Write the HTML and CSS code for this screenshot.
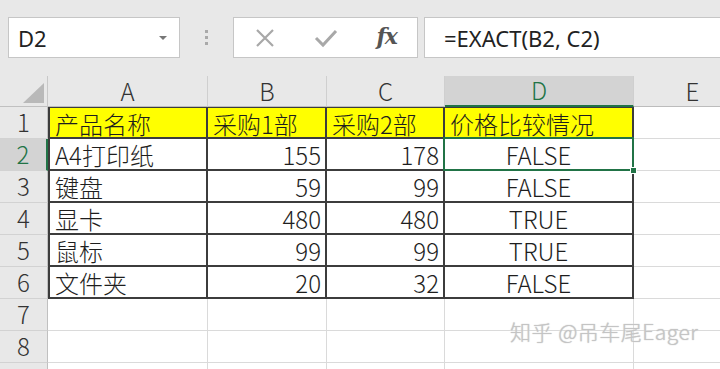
FILE: index.html
```html
<!DOCTYPE html>
<html lang="zh-CN">
<head>
    <meta charset="UTF-8">
    <title>EXACT</title>
    <link rel="stylesheet" href="styles.css">
</head>
<body>
    <div class="toolbar">
        <div class="name-box">
            <span>D2</span>
            <svg class="caret" width="10" height="6" viewBox="0 0 10 6"><path d="M1 1 L9 1 L5 5 Z" fill="#777"/></svg>
        </div>
        <div class="grip"><i></i><i></i><i></i></div>
        <div class="fx-buttons">
            <svg class="btn-icon" width="22" height="22" viewBox="0 0 22 22"><path d="M3 3 L19 19 M19 3 L3 19" stroke="#a8a8a8" stroke-width="2.2" fill="none"/></svg>
            <svg class="btn-icon" width="24" height="22" viewBox="0 0 24 22"><path d="M2 11 L9 18 L22 4" stroke="#a8a8a8" stroke-width="3" fill="none"/></svg>
            <span class="fx">fx</span>
        </div>
        <div class="formula">=EXACT(B2, C2)</div>
    </div>

    <div class="sheet">
        <div class="corner"><svg width="48" height="31" viewBox="0 0 48 31"><path d="M23 27 L44 27 L44 7 Z" fill="#b9b9b9"/></svg></div>
        <div class="col-head">A</div>
        <div class="col-head">B</div>
        <div class="col-head">C</div>
        <div class="col-head active">D</div>
        <div class="col-head">E</div>

        <div class="row-head">1</div>
        <div class="cell t tl tt hl">产品名称</div>
        <div class="cell t tt hl">采购1部</div>
        <div class="cell t tt hl">采购2部</div>
        <div class="cell t tt hl">价格比较情况</div>
        <div class="cell"></div>

        <div class="row-head active">2</div>
        <div class="cell t tl">A4打印纸</div>
        <div class="cell t num">155</div>
        <div class="cell t num">178</div>
        <div class="cell t mid selected"><span>FALSE</span><span class="sel-frame"></span><span class="handle"></span></div>
        <div class="cell"></div>

        <div class="row-head">3</div>
        <div class="cell t tl">键盘</div>
        <div class="cell t num">59</div>
        <div class="cell t num">99</div>
        <div class="cell t mid">FALSE</div>
        <div class="cell"></div>

        <div class="row-head">4</div>
        <div class="cell t tl">显卡</div>
        <div class="cell t num">480</div>
        <div class="cell t num">480</div>
        <div class="cell t mid">TRUE</div>
        <div class="cell"></div>

        <div class="row-head">5</div>
        <div class="cell t tl">鼠标</div>
        <div class="cell t num">99</div>
        <div class="cell t num">99</div>
        <div class="cell t mid">TRUE</div>
        <div class="cell"></div>

        <div class="row-head">6</div>
        <div class="cell t tl">文件夹</div>
        <div class="cell t num">20</div>
        <div class="cell t num">32</div>
        <div class="cell t mid">FALSE</div>
        <div class="cell"></div>

        <div class="row-head">7</div>
        <div class="cell"></div><div class="cell"></div><div class="cell"></div><div class="cell"></div><div class="cell"></div>

        <div class="row-head">8</div>
        <div class="cell"></div><div class="cell"></div><div class="cell"></div><div class="cell"></div><div class="cell"></div>

        <div class="row-head"></div>
        <div class="cell"></div><div class="cell"></div><div class="cell"></div><div class="cell"></div><div class="cell"></div>

        <div class="watermark">知乎 @吊车尾Eager</div>
    </div>
</body>
</html>
```

FILE: styles.css
```css
* {
    margin: 0;
    padding: 0;
    box-sizing: border-box;
}

body {
    width: 720px;
    height: 369px;
    overflow: hidden;
    background: #e8e8e8;
    font-family: "Noto Sans", "Noto Sans CJK SC", sans-serif;
    color: #222;
}

/* formula bar */
.toolbar {
    height: 76px;
    display: flex;
    align-items: flex-start;
    padding: 17px 0 0 8px;
}

.name-box {
    width: 172px;
    height: 41px;
    background: #fff;
    border: 1px solid #c6c6c6;
    display: flex;
    align-items: center;
    justify-content: space-between;
    padding: 0 11px 0 9px;
    font-size: 22px;
}

.grip {
    width: 53px;
    height: 41px;
    display: flex;
    flex-direction: column;
    align-items: center;
    justify-content: center;
    gap: 3px;
}

.grip i {
    width: 3px;
    height: 3px;
    background: #a9a9a9;
}

.fx-buttons {
    width: 185px;
    height: 41px;
    background: #fff;
    border: 1px solid #c6c6c6;
    display: flex;
    align-items: center;
    padding: 0 20px 0 20px;
    justify-content: space-between;
}

.fx {
    font-family: "DejaVu Serif", "Liberation Serif", serif;
    font-style: italic;
    font-weight: bold;
    font-size: 22px;
    color: #555;
    letter-spacing: -1px;
    padding-bottom: 3px;
}

.formula {
    flex: 1;
    height: 41px;
    margin-left: 6px;
    background: #fff;
    border: 1px solid #c6c6c6;
    border-right: none;
    display: flex;
    align-items: center;
    padding-left: 19px;
    font-size: 22px;
    color: #222;
}

/* grid */
.sheet {
    position: relative;
    display: grid;
    grid-template-columns: 48px 160px 119px 118px 189px 118px;
    grid-template-rows: 31px repeat(9, 32px);
    background: #fff;
    font-family: "Noto Sans CJK SC", sans-serif;
    font-weight: 300;
    font-size: 24px;
    line-height: 1.1;
}

.corner {
    background: #e8e8e8;
    border-right: 1px solid #c8c8c8;
    border-bottom: 1px solid #c0c0c0;
}

.corner svg {
    display: block;
}

.col-head {
    background: #e8e8e8;
    border-right: 1px solid #cfcfcf;
    border-bottom: 1px solid #bcbcbc;
    display: flex;
    align-items: center;
    justify-content: center;
    color: #333;
}

.col-head.active {
    background: #d3d3d3;
    color: #217346;
    border-bottom: 2px solid #217346;
}

.row-head {
    background: #e8e8e8;
    border-right: 1px solid #c0c0c0;
    border-bottom: 1px solid #d2d2d2;
    display: flex;
    align-items: center;
    justify-content: center;
    color: #333;
}

.row-head.active {
    background: #d3d3d3;
    color: #217346;
    border-right: 2px solid #217346;
}

.cell {
    border-right: 1px solid #dadada;
    border-bottom: 1px solid #dadada;
    display: flex;
    align-items: center;
    padding: 3px 5px 0;
    white-space: nowrap;
    color: #1e1e1e;
}

.cell.t {
    border-right: 2px solid #3c3c3c;
    border-bottom: 2px solid #3c3c3c;
}

.cell.tl {
    border-left: 2px solid #3c3c3c;
}

.cell.tt {
    border-top: 1px solid #3c3c3c;
}

.cell.hl {
    background: #ffff00;
}

.cell.num {
    justify-content: flex-end;
    padding-right: 4px;
}

.cell.mid {
    justify-content: center;
}

.selected {
    position: relative;
}

.sel-frame {
    position: absolute;
    top: -2px;
    left: -2px;
    right: -2px;
    bottom: -2px;
    border: 2px solid #217346;
}

.handle {
    position: absolute;
    right: -5px;
    bottom: -5px;
    width: 7px;
    height: 7px;
    background: #217346;
    border: 1px solid #fff;
    z-index: 2;
}

.watermark {
    position: absolute;
    left: 510px;
    top: 244px;
    font-family: "Noto Sans CJK SC", sans-serif;
    font-weight: 300;
    font-size: 21px;
    color: #c4c4c4;
    text-shadow: 0 0 2px #fff, 0 0 1px #999;
    letter-spacing: 0.5px;
}
```
